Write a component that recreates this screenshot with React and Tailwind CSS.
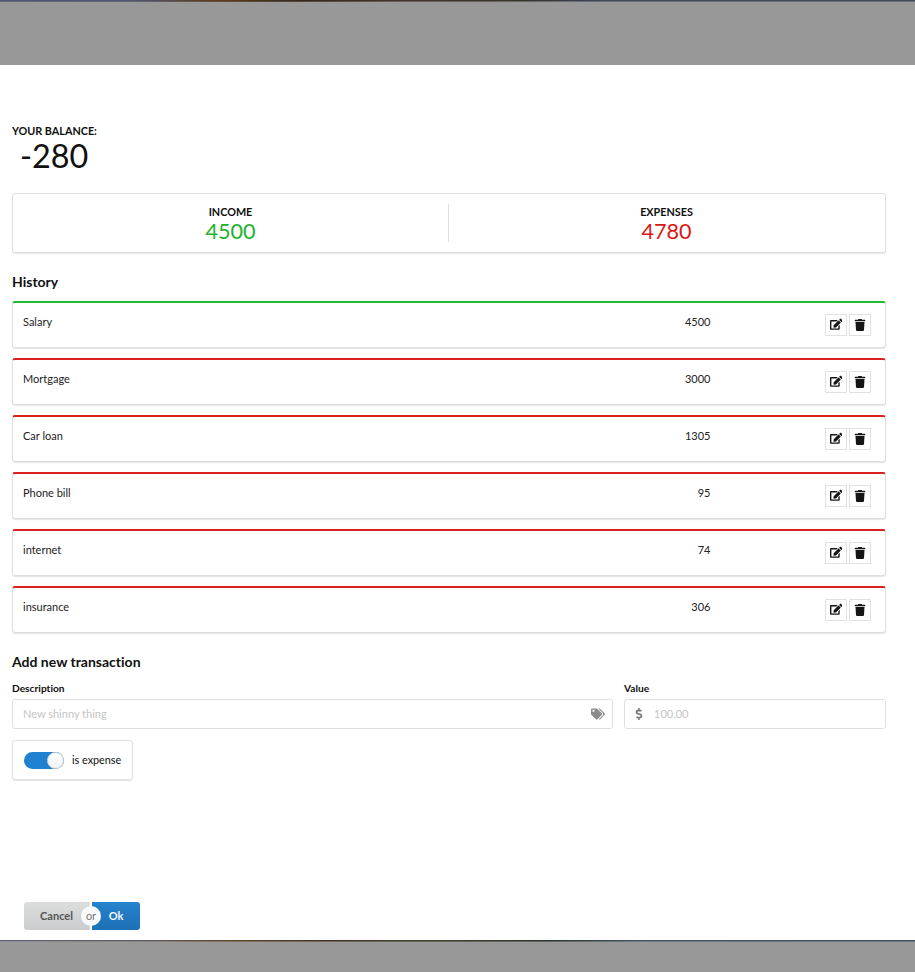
import React from "react";
import { FaEdit, FaTrash, FaTags, FaDollarSign } from "react-icons/fa";

const entries = [
  { name: "Salary", value: "4500", expense: false },
  { name: "Mortgage", value: "3000", expense: true },
  { name: "Car loan", value: "1305", expense: true },
  { name: "Phone bill", value: "95", expense: true },
  { name: "internet", value: "74", expense: true },
  { name: "insurance", value: "306", expense: true },
];

function IconBox({ children }) {
  return (
    <button className="flex h-[22px] w-[22px] items-center justify-center border border-[#e2e2e2] pb-px text-[#151515]">
      {children}
    </button>
  );
}

function Stat({ label, value, color }) {
  return (
    <div className="flex flex-1 flex-col items-center pt-[11px] pr-px">
      <div className="text-[10.8px] leading-[14px] font-bold">{label}</div>
      <div className={`text-[21.6px] leading-[25px] ${color}`}>{value}</div>
    </div>
  );
}

function Row({ name, value, expense }) {
  return (
    <div
      className={`flex h-[47px] rounded-[3px] border border-t-2 border-[#dfdfdf] text-[11px] leading-[16px] text-[#222] shadow-[0_1px_1px_rgba(34,36,38,0.12)] ${
        expense ? "border-t-[#db2020]" : "border-t-[#21ba30]"
      }`}
    >
      <div className="w-[500px] pt-[11px] pl-[10px]">{name}</div>
      <div className="w-[197.5px] pt-[11px] text-right">{value}</div>
      <div className="ml-auto flex gap-[2px] pt-[11px] pr-[14px]">
        <IconBox>
          <FaEdit size={12.5} />
        </IconBox>
        <IconBox>
          <FaTrash size={12} />
        </IconBox>
      </div>
    </div>
  );
}

export default function App() {
  return (
    <div className="flex h-[972px] w-[915px] flex-col overflow-hidden bg-white font-['Lato',sans-serif] text-[#101010] [font-variant-ligatures:none]">
      <div className="h-px bg-[linear-gradient(to_right,#50566f_0%,#50526a_15%,#5a3c1c_24%,#33291f_33%,#423530_45%,#33332c_57%,#42475a_66%,#42475a_100%)]" />
      <div className="h-px bg-[linear-gradient(to_right,#666b83_0%,#626477_15%,#674d33_24%,#4d453e_33%,#6a625e_45%,#67675f_57%,#686d7c_66%,#686d7c_100%)]" />
      <div className="h-[63px] bg-[#989898]" />

      <main className="h-[875px] pt-[59px] pr-[29px] pl-[12px]">
        <div className="h-[69px]">
          <div className="text-[10.8px] leading-[14px] font-bold">YOUR BALANCE:</div>
          <div className="pl-[8px] text-[32.4px] leading-[36px]">-280</div>
        </div>

        <div className="flex h-[60px] items-stretch rounded-[3px] border border-[#e0e0e0] shadow-[0_1px_1px_rgba(34,36,38,0.12)]">
          <Stat label="INCOME" value="4500" color="text-[#1db32d]" />
          <div className="my-[10px] -ml-px w-px bg-[#e0e0e0]" />
          <Stat label="EXPENSES" value="4780" color="text-[#db1616]" />
        </div>

        <h3 className="mt-[20px] mb-[10px] text-[14px] leading-[18px] font-bold">History</h3>
        <div className="flex flex-col gap-[10px]">
          {entries.map((e) => (
            <Row key={e.name} {...e} />
          ))}
        </div>

        <h3 className="mt-[20px] text-[14px] leading-[18px] font-bold">Add new transaction</h3>
        <div className="mt-[10px] flex gap-[11px]">
          <div className="w-[601px]">
            <div className="mb-[4px] text-[10.2px] leading-[14px] font-bold">Description</div>
            <div className="flex h-[30px] items-center justify-between rounded-[3px] border border-[#e0e0e0] pr-[7px] pl-[10px] text-[11px] text-[#c4c4c4]">
              <span>New shinny thing</span>
              <FaTags size={14} className="text-[#8c8c8c]" />
            </div>
          </div>
          <div className="flex-1">
            <div className="mb-[4px] text-[10.2px] leading-[14px] font-bold">Value</div>
            <div className="flex h-[30px] items-center rounded-[3px] border border-[#e0e0e0] pl-[8px] text-[11px] text-[#c4c4c4]">
              <FaDollarSign size={12} className="mr-[9px] text-[#7c7c7c]" />
              <span>100.00</span>
            </div>
          </div>
        </div>

        <div className="mt-[11px] flex h-[40px] w-[121px] items-center rounded-[3px] border border-[#e0e0e0] pl-[11px] text-[10.8px] shadow-[0_1px_1px_rgba(34,36,38,0.12)]">
          <div className="flex h-[17px] w-[40px] items-center justify-end rounded-full bg-[#2081d0]">
            <div className="h-[17px] w-[17px] rounded-full border border-[#d6d6d6] bg-linear-to-b from-white to-[#f2f2f2]" />
          </div>
          <span className="ml-[8px]">is expense</span>
        </div>

        <div className="relative mt-[122px] ml-[12px] flex h-[28px] w-[116px] text-[11px] font-bold">
          <button className="w-[66px] rounded-l-[3px] bg-linear-to-b from-[#dcdddd] to-[#cbcccd] pr-px text-[#555]">Cancel</button>
          <button className="ml-[2px] w-[48px] rounded-r-[3px] bg-linear-to-b from-[#2583cc] to-[#1d70b5] text-[#f4f8fb]">Ok</button>
          <span className="absolute top-[4px] left-[57px] flex h-[20px] w-[20px] items-center justify-center rounded-full bg-[#fafafa] font-normal text-[#777]">
            or
          </span>
        </div>
      </main>

      <div className="h-px bg-[linear-gradient(to_right,#5c6075_0%,#5c5c68_15%,#5f4325_26%,#403428_36%,#3c3f30_48%,#2e362e_60%,#46525c_70%,#434d5a_100%)]" />
      <div className="h-px bg-[linear-gradient(to_right,#8c8e95_0%,#8a8782_15%,#80715f_26%,#6c645c_36%,#65675a_48%,#5f6660_60%,#6d7984_70%,#687482_100%)]" />
      <div className="flex-1 bg-[#989898]" />
    </div>
  );
}
